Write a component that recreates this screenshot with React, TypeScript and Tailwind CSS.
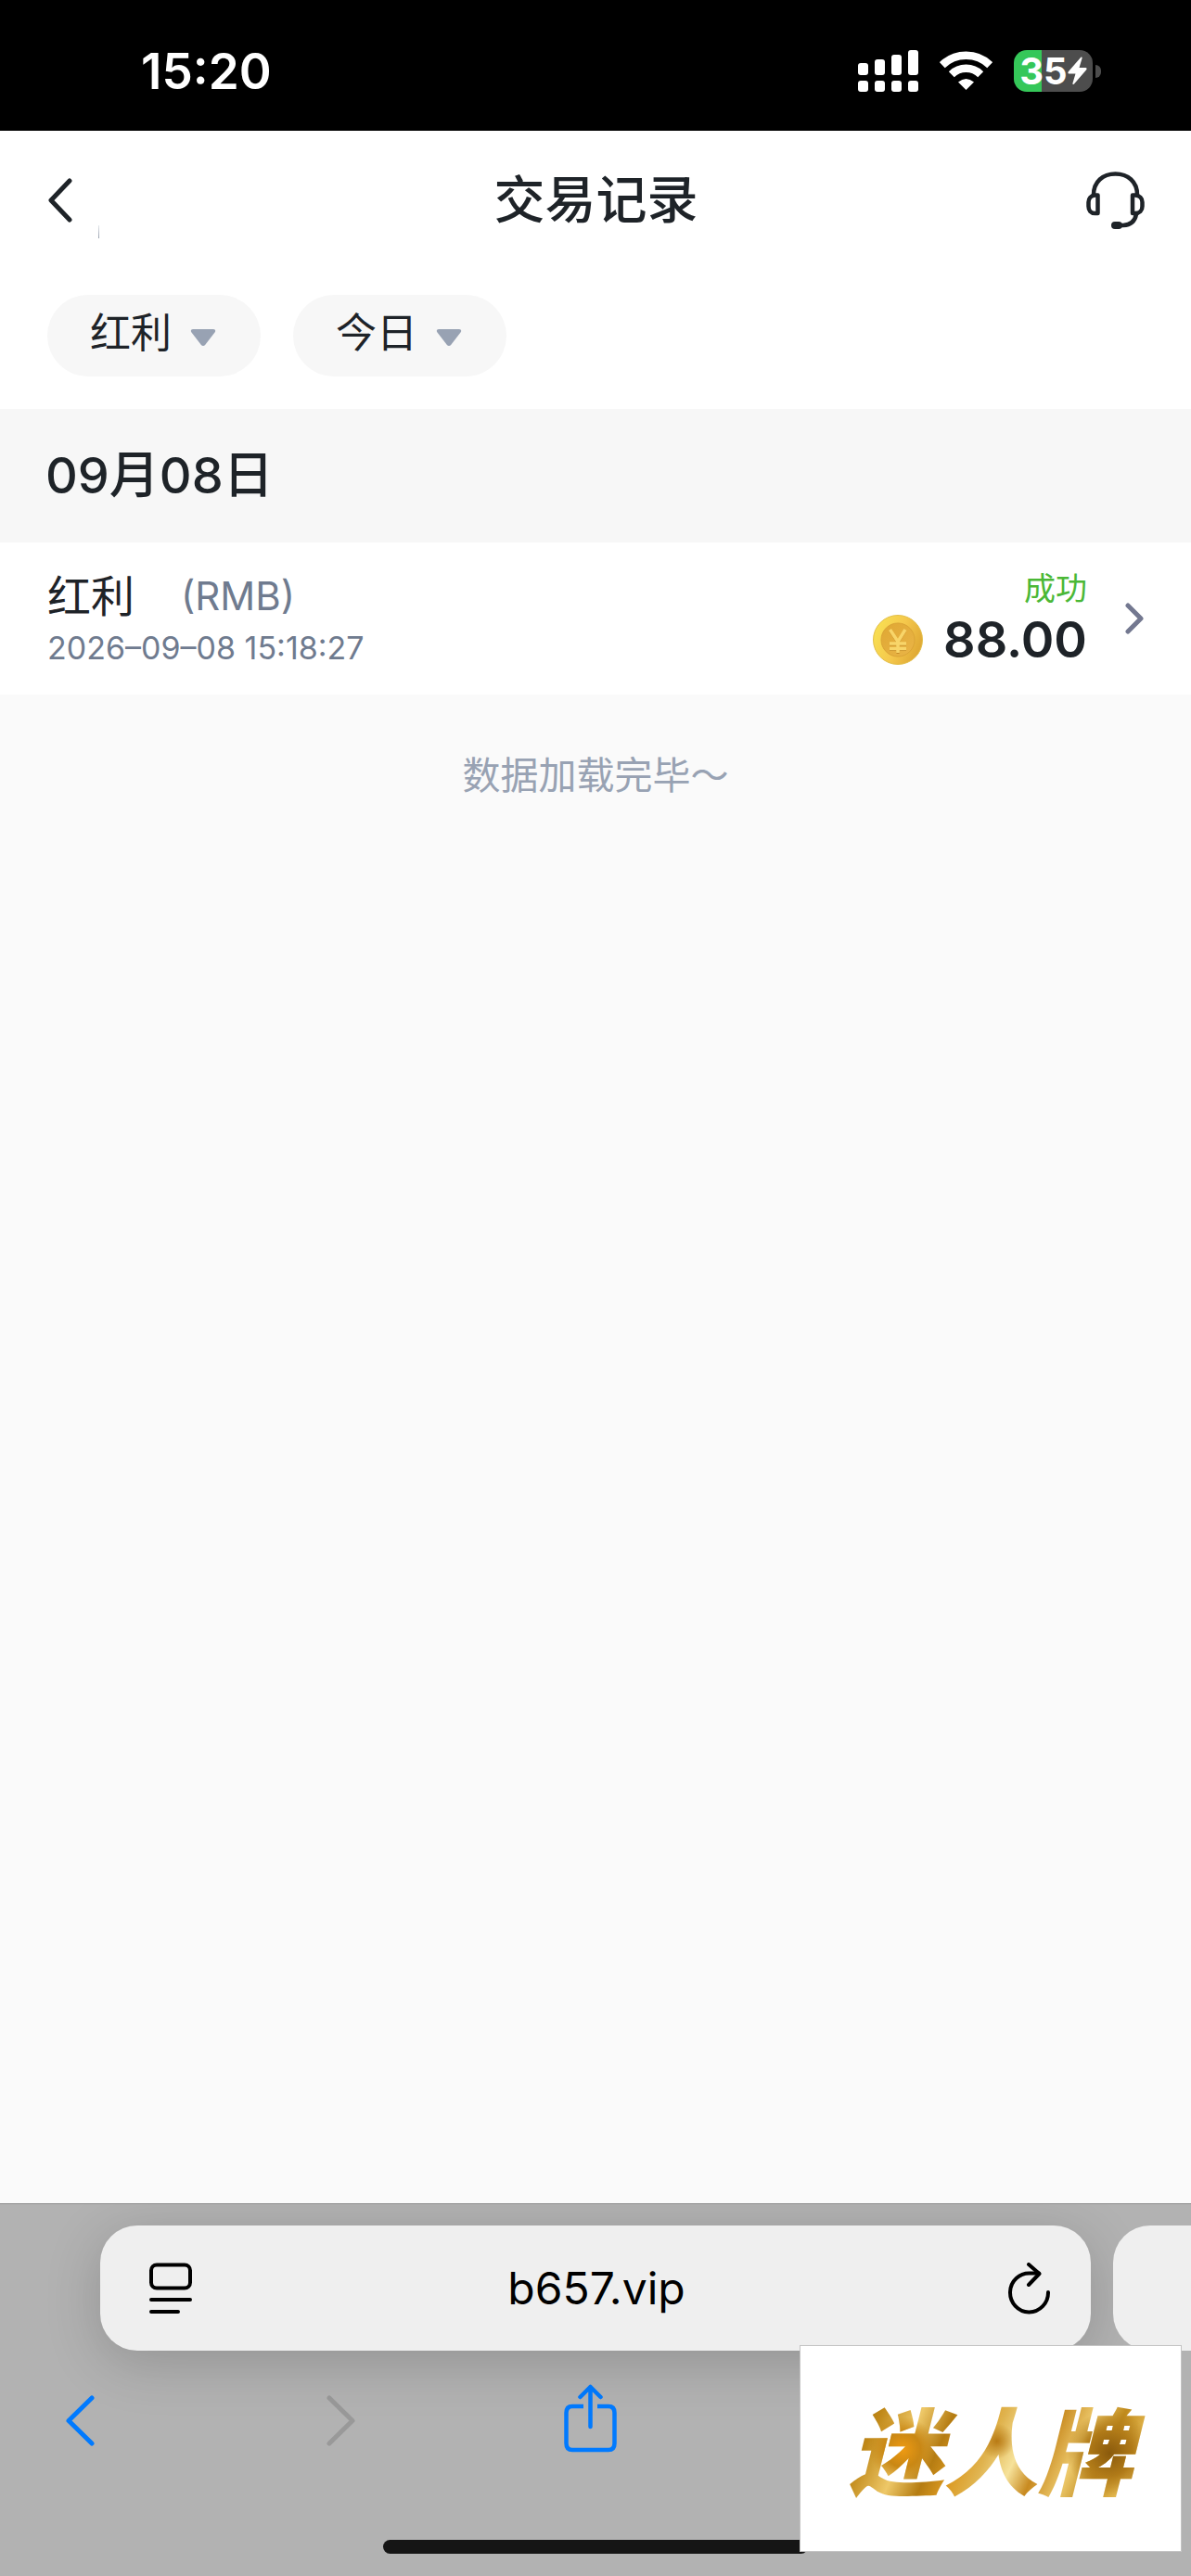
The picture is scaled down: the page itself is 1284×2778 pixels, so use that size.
import type { ReactNode } from "react";

type Record = {
  id: number;
  name: string;
  currency: string;
  time: string;
  status: string;
  amount: string;
};

const records: Record[] = [
  { id: 1, name: "红利", currency: "(RMB)", time: "2026–09–08 15:18:27", status: "成功", amount: "88.00" },
];

function StatusBar() {
  return (
    <div className="flex h-[141px] items-center justify-between bg-black pt-3 pl-[152px] pr-[97px] text-white">
      <span className="pt-[2px] text-[53px] leading-none font-semibold">15:20</span>
      <div className="flex items-center gap-[23px]">
        {/* Signal */}
        <svg width="65" height="45" viewBox="0 0 65 45" fill="currentColor">
          <rect x="0" y="14" width="11" height="13" rx="3" />
          <rect x="18" y="10" width="11" height="17" rx="3" />
          <rect x="36" y="5" width="11" height="22" rx="3" />
          <rect x="54" y="0" width="11" height="27" rx="3" />
          <rect x="0" y="33" width="11" height="12" rx="3" />
          <rect x="18" y="33" width="11" height="12" rx="3" />
          <rect x="36" y="33" width="11" height="12" rx="3" />
          <rect x="54" y="33" width="11" height="12" rx="3" />
        </svg>
        {/* Wifi */}
        <svg width="57" height="43" viewBox="0 0 57 43" fill="none" stroke="currentColor">
          <path d="M2.8 15.2 A37 37 0 0 1 54.2 15.2" strokeWidth="8.5" />
          <path d="M12.8 25.2 A22.5 22.5 0 0 1 44.2 25.2" strokeWidth="8.5" />
          <path d="M28.5 42 L20 33.5 Q28.5 26.500 37 33.500 Z" fill="currentColor" stroke="none" />
        </svg>
        {/* Battery */}
        <div className="flex items-center gap-[3px]">
          <div className="flex h-[45px] w-[85px] items-center justify-center rounded-[14px] bg-[linear-gradient(90deg,#35c759_35%,#4d4d4d_35%)]">
            <span className="text-[40px] leading-none font-bold">35</span>
            <svg width="21" height="31" viewBox="0 0 21 31" fill="currentColor">
              <path d="M14.500 0.500 Q16 0 15.500 2 L12.500 12 H19.500 Q21.500 12.500 20 14.500 L7 29.500 Q5 31 5.500 28.500 L8.500 18.500 H1.500 Q-0.500 18 1 16 Z" />
            </svg>
          </div>
          <div className="h-[14px] w-[6px] rounded-r-full bg-[#4d4d4d]" />
        </div>
      </div>
    </div>
  );
}

function Header() {
  return (
    <header className="grid h-[150px] grid-cols-[1fr_auto_1fr] items-center bg-white pl-[51px] pr-[50px]">
      <div className="flex items-center gap-7">
        <button type="button" aria-label="返回">
          <svg width="27" height="48" viewBox="0 0 27 48" fill="none" stroke="currentColor" strokeWidth="5" strokeLinecap="round" strokeLinejoin="round">
            <path d="M24 3 L4 24 L24 45" />
          </svg>
        </button>
        <span className="mt-[68px] h-[14px] w-px bg-gradient-to-b from-gray-200 to-gray-400" />
      </div>
      <h1 className="pb-[2px] text-[55px] leading-none font-medium">交易记录</h1>
      <button type="button" aria-label="客服" className="justify-self-end">
        <svg width="63" height="63" viewBox="0 0 63 63" fill="none" stroke="currentColor" strokeWidth="4.500" strokeLinejoin="round">
          <path d="M8 25 C8 11 18 2.500 31.500 2.500 S55 11 55 25" />
          <path d="M12.500 25.500 H9.500 C5 26 2.500 29 2.500 33 V37.500 C2.500 42 5 45 9.500 45 H12.500 Z" />
          <path d="M50 25.500 H53 C57.500 26 60.500 29 60.500 33 V37.500 C60.500 42 57.500 45 53 45 H50 Z" />
          <path d="M54 46 C52.500 54 48 57.500 40 58 H32" />
          <rect x="27" y="54" width="12" height="8" rx="4" fill="currentColor" stroke="none" />
        </svg>
      </button>
    </header>
  );
}

function Filter({ children }: { children: ReactNode }) {
  return (
    <button type="button" className="flex h-[88px] items-center gap-5 rounded-full bg-[#f7f7f7] pr-12 pl-[46px]">
      <span className="pb-[6px] text-[44px] leading-none">{children}</span>
      <svg className="mt-1" width="28" height="20" viewBox="0 0 28 20" fill="#98a2b3">
        <path d="M3 1 H25 Q28.500 1.500 26.500 4.500 L16.500 17.500 Q14 20.500 11.500 17.500 L1.500 4.500 Q-0.500 1.500 3 1 Z" />
      </svg>
    </button>
  );
}

function Coin() {
  return (
    <svg width="54" height="54" viewBox="0 0 54 54">
      <defs>
        <linearGradient id="rim" x1="0" y1="0.300" x2="1" y2="0.700">
          <stop offset="0" stopColor="#f8e052" />
          <stop offset="0.500" stopColor="#f5c84c" />
          <stop offset="1" stopColor="#dda532" />
        </linearGradient>
        <linearGradient id="face" x1="0" y1="0" x2="1" y2="1">
          <stop offset="0" stopColor="#dfa732" />
          <stop offset="1" stopColor="#eab548" />
        </linearGradient>
      </defs>
      <circle cx="27" cy="27" r="26.500" fill="url(#rim)" stroke="#e3bf4b" />
      <circle cx="27" cy="27" r="18" fill="url(#face)" stroke="#dba436" />
      <path d="M18.500 17 L27 30 L35 17 M27 30 V42 M18 32 H36 M18 37.500 H36" fill="none" stroke="#c48a26" strokeWidth="3" />
      <path d="M18.500 16 L27 29 L35 16 M27 29 V41 M18 31 H36 M18 36.500 H36" fill="none" stroke="#f8d569" strokeWidth="3.500" />
    </svg>
  );
}

function RecordRow({ record }: { record: Record }) {
  return (
    <li className="flex h-[164px] items-center justify-between bg-white pr-[50px] pl-[51px]">
      <div className="flex flex-col gap-[10px] pt-[2px]">
        <div className="flex items-center gap-[50px]">
          <span className="text-[47px] leading-[52px]">{record.name}</span>
          <span className="text-[42px] leading-[52px] text-[#6f7b8f]">{record.currency}</span>
        </div>
        <time className="text-[34px] leading-10 text-[#6f7b8f]">{record.time}</time>
      </div>
      <div className="flex items-center gap-10">
        <div className="flex flex-col items-end gap-[6px]">
          <span className="text-[34px] leading-10 text-[#4bb836]">{record.status}</span>
          <div className="flex items-center gap-[22px]">
            <Coin />
            <span className="text-[54px] leading-[58px] font-semibold">{record.amount}</span>
          </div>
        </div>
        <svg width="22" height="35" viewBox="0 0 22 35" fill="none" stroke="#737890" strokeWidth="5" strokeLinecap="round" strokeLinejoin="round">
          <path d="M4 3 L18 17 L4 31" />
        </svg>
      </div>
    </li>
  );
}

function BrowserBar() {
  return (
    <footer className="flex h-[402px] flex-col overflow-hidden border-t border-[#8e8e8e] bg-[#b2b2b2] pt-[23px] text-black">
      <div className="flex gap-6 pl-[108px]">
        <div className="z-10 flex h-[135px] flex-1 items-center justify-between rounded-[40px] bg-[#efefef] pr-[43px] pl-[53px] shadow-[0_12px_60px_rgba(0,0,0,0.18)]">
          <button type="button" aria-label="页面设置">
            <svg width="46" height="55" viewBox="0 0 46 55" fill="none" stroke="currentColor" strokeWidth="4" strokeLinecap="round">
              <rect x="2" y="2.500" width="42" height="25" rx="6" />
              <path d="M2 40 H44 M2 53 H31" />
            </svg>
          </button>
          <span className="pr-2 text-[48px] leading-none">b657.vip</span>
          <button type="button" aria-label="刷新">
            <svg width="46" height="56" viewBox="0 0 46 56" fill="none" stroke="currentColor" strokeWidth="4" strokeLinecap="round" strokeLinejoin="round">
              <path d="M43 32 A20.500 21 0 1 1 24 11.500 H33" />
              <path d="M22 2 L33.500 12 L22 24" />
            </svg>
          </button>
        </div>
        <div className="z-20 h-[135px] w-[84px] rounded-l-[40px] bg-[#efefef]" />
      </div>
      <nav className="flex items-start gap-[249px] pt-9 pl-[70px] text-[#007aff]">
        <button type="button" aria-label="后退" className="pt-3">
          <svg width="33" height="55" viewBox="0 0 33 55" fill="none" stroke="currentColor" strokeWidth="5" strokeLinecap="round" strokeLinejoin="round">
            <path d="M29 3 L4 27.500 L29 52" />
          </svg>
        </button>
        <button type="button" aria-label="前进" disabled className="pt-3 text-[#999]">
          <svg width="33" height="55" viewBox="0 0 33 55" fill="none" stroke="currentColor" strokeWidth="5" strokeLinecap="round" strokeLinejoin="round">
            <path d="M3 3 L28 27.500 L3 52" />
          </svg>
        </button>
        <button type="button" aria-label="分享" className="-ml-[26px]">
          <svg width="58" height="74" viewBox="0 0 58 74" fill="none" stroke="currentColor" strokeWidth="4.500" strokeLinecap="round" strokeLinejoin="round">
            <path d="M21 24 H9 Q2.500 24 2.500 31 V64 Q2.500 71 9 71 H48 Q54.500 71 54.500 64 V31 Q54.500 24 48 24 H36" strokeLinecap="butt" />
            <path d="M28.500 46 V3 M17.500 14 L28.500 3 L39.500 14" />
          </svg>
        </button>
      </nav>
      <div className="mx-auto mt-auto mb-6 h-[15px] w-[458px] rounded-full bg-[#151515]" />
    </footer>
  );
}

export default function App() {
  return (
    <div className="relative flex min-h-screen flex-col bg-[#fafafa] font-['Inter','Noto_Sans_CJK_SC',sans-serif] text-[#1e2328]">
      <StatusBar />
      <Header />
      <div className="flex gap-[35px] bg-white px-[51px] pt-[27px] pb-[35px]">
        <Filter>红利</Filter>
        <Filter>今日</Filter>
      </div>
      <main className="flex-1">
        <h2 className="flex h-36 items-center bg-[#f7f7f7] px-[49px] text-[54px] leading-none font-medium">09月08日</h2>
        <ul>
          {records.map((record) => (
            <RecordRow key={record.id} record={record} />
          ))}
        </ul>
        <p className="pt-[61px] text-center text-[41px] leading-[52px] text-[#98a2b3]">数据加载完毕～</p>
      </main>
      <BrowserBar />

      {/* Floating brand tag */}
      <div className="absolute right-[10px] bottom-[26px] z-30 flex h-[223px] w-[412px] items-center justify-center border border-[#c4c4c4] bg-white pb-1">
        <span className="bg-[radial-gradient(circle_at_22%_52%,#ee9a12_0,#c98714_7%,transparent_13%),radial-gradient(circle_at_52%_45%,#b87a14_0,transparent_10%),radial-gradient(circle_at_88%_55%,#8a5a0c_0,#b07a18_8%,transparent_15%),linear-gradient(115deg,#9c6a0c_6%,#c08818_16%,#eec868_27%,#b57c12_36%,#dc9a22_43%,#e0b450_50%,#f6e29a_58%,#c88a20_65%,#edc96c_74%,#c08a1c_82%,#e4b850_90%,#9a6810_100%)] bg-clip-text px-4 font-['Noto_Sans_CJK_SC',sans-serif] text-[102px] leading-[130px] font-black text-transparent italic">
          迷人牌
        </span>
      </div>
    </div>
  );
}
